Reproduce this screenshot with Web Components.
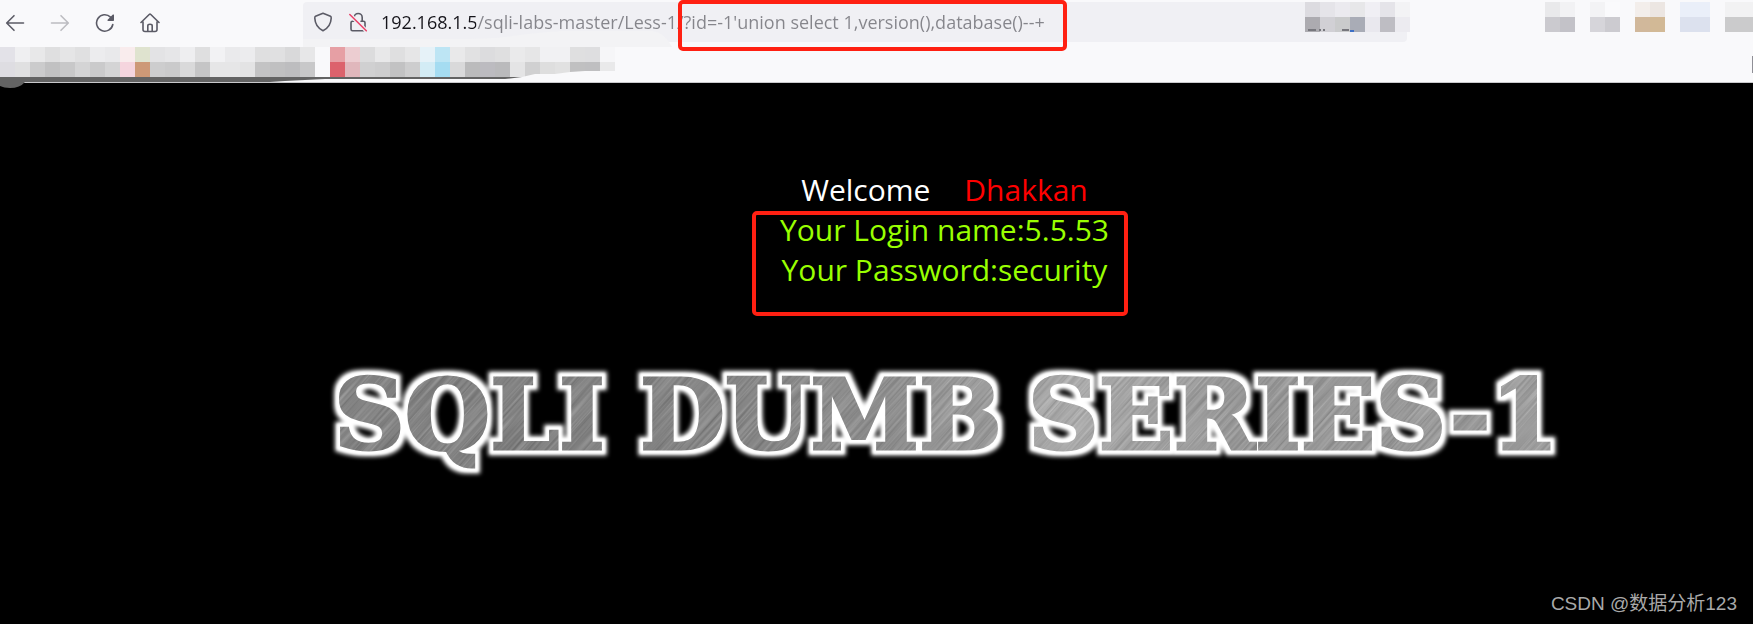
<!DOCTYPE html>
<html lang="en">
<head>
<meta charset="UTF-8">
<title>Less-1 SQL injection</title>
<style>
  body {
    margin: 0;
    min-height: 100vh;
    display: flex;
    flex-direction: column;
    background: #000;
    font-family: "Open Sans", "Noto Sans", "Noto Sans CJK SC", sans-serif;
    overflow-x: hidden;
  }
</style>
</head>
<body>
<browser-chrome>
  <nav-buttons slot="nav"></nav-buttons>
  <address-bar slot="address"></address-bar>
  <extension-tray slot="extensions"></extension-tray>
  <bookmark-strip slot="bookmarks"></bookmark-strip>
</browser-chrome>
<lesson-page>
  <login-result name="5.5.53" password="security"></login-result>
  <title-banner></title-banner>
</lesson-page>
<author-mark>CSDN @数据分析123</author-mark>

<script>
// Attach an open shadow root and fill it
function fill(host, html) {
  host.attachShadow({ mode: 'open' }).innerHTML = html;
}

// Turn rows of hex colours into 15px blocks, "-" leaves a block empty
function mosaic(rows) {
  return rows.map((row, y) => row.trim().split(/\s+/).map((c, x) =>
    c === '-' ? '' : `<rect x="${x * 15}" y="${y * 15}" width="15" height="15" fill="#${c}"/>`
  ).join('')).join('');
}

class BrowserChrome extends HTMLElement {
  constructor() {
    super();
    fill(this, `
      <style>
        :host { display: block; background: #f9f9fb; position: relative; border-bottom: 1px solid #c9c9cc; }
        .bar { display: flex; height: 47px; align-items: flex-start; }
        slot[name="address"]::slotted(*) { flex: 1; margin: 2px 138px 0; }
      </style>
      <div class="bar">
        <slot name="nav"></slot>
        <slot name="address"></slot>
        <slot name="extensions"></slot>
      </div>
      <slot name="bookmarks"></slot>
    `);
  }
}
customElements.define('browser-chrome', BrowserChrome);

class NavButtons extends HTMLElement {
  constructor() {
    super();
    fill(this, `
      <style>
        :host { display: flex; gap: 15px; padding-top: 8px; }
        button { width: 30px; height: 30px; padding: 0; border: 0; background: none; color: #5b5b66; display: grid; place-items: center; }
        button:disabled { color: #bcbcc1; }
        svg { width: 20px; height: 20px; fill: none; stroke: currentColor; stroke-width: 1.6; stroke-linecap: round; stroke-linejoin: round; }
      </style>
      <button aria-label="Back"><svg viewBox="0 0 20 20"><path d="M18.500 10H2M9 2.700L1.700 10L9 17.300"/></svg></button>
      <button aria-label="Forward" disabled><svg viewBox="0 0 20 20"><path d="M1.500 10H18M11 2.700L18.300 10L11 17.300"/></svg></button>
      <button aria-label="Reload"><svg viewBox="0 0 20 20"><path d="M17.800 11.500A8.200 8.200 0 1 1 15.500 4.100"/><path d="M18.200 2.200V7.200H13.200Z" fill="currentColor"/></svg></button>
      <button aria-label="Home"><svg viewBox="0 0 20 20"><path d="M1 9.500L9.200 1.500Q10 .8 10.800 1.500L19 9.500M3 8.500V16.500Q3 18.500 5 18.500H15Q17 18.500 17 16.500V8.500M7.800 18V12.800Q7.800 11.300 10 11.300T12.200 12.800V18"/></svg></button>
    `);
  }
}
customElements.define('nav-buttons', NavButtons);

class AddressBar extends HTMLElement {
  constructor() {
    super();
    fill(this, `
      <style>
        :host { display: flex; height: 40px; align-items: center; background: #f0f0f4; border-radius: 4px; position: relative; min-width: 0; }
        .icons { display: flex; gap: 15px; padding: 0 13px 0 10px; z-index: 1; }
        .icons svg { width: 20px; height: 20px; fill: none; stroke: #5b5b66; stroke-width: 1.6; stroke-linecap: round; stroke-linejoin: round; }
        /* host part of the address is dark, the path is grey */
        input {
          flex: 1; min-width: 0; height: 40px; padding: 0; border: 0; outline: 0; z-index: 1;
          font: 18px "Open Sans", "Noto Sans", sans-serif;
          color: #85858b;
          -webkit-text-fill-color: transparent;
          background: linear-gradient(90deg, #15141a 95px, #85858b 95px);
          -webkit-background-clip: text; background-clip: text;
        }
        .smudge { position: absolute; left: 0; bottom: -5px; width: 372px; height: 16px; }
        .blocks { position: absolute; right: -3px; top: 0; width: 105px; height: 33px; z-index: 1; }
        .mark { position: absolute; left: 375px; top: -2px; width: 381px; height: 43px; border: 4px solid #ff2012; border-radius: 5px; z-index: 2; }
      </style>
      <svg class="smudge" viewBox="0 0 372 16"><path d="M0 8H150Q190 8 210 5T260 0H350Q362 2 369 16H0Z" fill="#f3f3f5"/></svg>
      <div class="icons">
        <svg viewBox="0 0 20 20"><path d="M10 1.200L17.500 4.300Q18.300 4.700 18.200 6.200Q17.800 14.800 10 18.700Q2.200 14.800 1.800 6.200Q1.700 4.700 2.500 4.300Z"/></svg>
        <svg viewBox="0 0 20 20"><path d="M6.200 6V5.500A4 4 0 0 1 14.200 5.500V8.500M9 9.200H4.500Q3 9.200 3 10.700V17Q3 18.700 4.500 18.700H15.500Q17 18.700 17 17V10.700Q17 9.200 15.500 9.200H13"/><path d="M1.800 2.500L18.300 18.800" stroke="#f0f0f4" stroke-width="4"/><path d="M1.800 2.500L18.300 18.800" stroke="#e9456b"/></svg>
      </div>
      <input type="text" aria-label="Address" spellcheck="false" value="192.168.1.5/sqli-labs-master/Less-1/?id=-1'union select 1,version(),database()--+">
      <svg class="blocks" viewBox="0 0 105 33">
        ${mosaic([
          'dcdbe0 e5e4e9 ebeaef e7e7e9 f0eff4 e5e4e9 f3f3f5',
          'acabb0 d1d0d5 cacbcc a9acb6 e9e8ee bebdc3 ecebf0'])}
        <path d="M3 28H11M14 28H16M18 28H20M37 28H44" stroke="#77777d" stroke-width="2"/>
        <path d="M45 29H49" stroke="#3d6fc5" stroke-width="2"/>
      </svg>
      <span class="mark"></span>
    `);
  }
}
customElements.define('address-bar', AddressBar);

class ExtensionTray extends HTMLElement {
  constructor() {
    super();
    fill(this, `
      <style>
        :host { display: block; width: 208px; padding-top: 2px; overflow: hidden; }
        svg { display: block; width: 210px; height: 30px; }
      </style>
      <svg viewBox="0 0 210 30">${mosaic([
        'e9e9eb f2f2f4 - f3f3f5 fafafc - f3eeeb ece6e2 - eaeff9 eaeff9 - f2f2f3 f2f2f3',
        'cbcacf c3c2c8 - d6d5da cccbd0 - d1b89b d2b996 - dce1ee dce1ee - cbcbcc cbcbcc'])}</svg>
    `);
  }
}
customElements.define('extension-tray', ExtensionTray);

class BookmarkStrip extends HTMLElement {
  constructor() {
    super();
    fill(this, `
      <style>
        :host { display: flex; justify-content: space-between; height: 35px; }
        svg { display: block; width: 620px; height: 42px; position: relative; overflow: visible; }
        .edge { width: 1px; height: 17px; margin-top: 9px; background: #8f8f96; }
      </style>
      <svg viewBox="0 0 620 42">
        ${mosaic([
          `e3e2e8 efeff1 e8e8e9 dfdfe0 e5e5e6 e0e0e1 ececee e9e9eb f9eced dfe3cf e3e3e5 e6e6e8 eeeef0 dfdfe0
           f2f2f4 eaeaec ececee dfdfe0 e0e0e1 d9d9da e7e7e8 f9f9fb e69fa4 eccdd1 dcdcdd e8e8e9 dfdfe0 e6e6e7
           e6f2f8 bde5f4 e9e9ea e1e1e2 dcdcde dfdfe0 eaeaeb e6e6e7 f1f1f3 f1f1f3 dfdfe0 dedee0 f6f6f8`,
          `dedde2 e0e0e1 cbcbcc c1c1c2 c8c8c9 d4d4d5 cacacb d4d4d5 f5d5de cd9977 cdcdce cacacb d9d9da c5c5c6
           e6e6e7 e6e6e7 e3e3e4 c3c3c4 c0c0c1 bdbdbf c8c8c9 f9f9fb dc626c e0b7bc d0d0d1 cdcdce c2c2c3 cdcdce
           d3ecf5 a5dcf1 d9d9da bbbbbc bcbbc0 bababc e4e4e5 d0d0d1 dedede e1e1e1 c0c0c1 bfbfc1 e9e9ea`])}
        <path d="M522 30L535 27L555 27L570 25L585 24H616V31H522Z" fill="#f9f9fb"/>
        <path d="M0 30H522L505 32H325L285 34L270 35H25Q20 41 10 41Q4 41 0 39Z" fill="#636363"/>
      </svg>
      <span class="edge"></span>
    `);
  }
}
customElements.define('bookmark-strip', BookmarkStrip);

// The lesson body sits right of the window's centre, behind a left gutter
class LessonPage extends HTMLElement {
  constructor() {
    super();
    fill(this, `
      <style>
        :host { display: flex; flex-direction: column; align-items: center; gap: 52px; padding: 87px 0 0 136px; }
      </style>
      <slot></slot>
    `);
  }
}
customElements.define('lesson-page', LessonPage);

class LoginResult extends HTMLElement {
  constructor() {
    super();
    fill(this, `
      <style>
        :host { display: block; position: relative; text-align: center; font-size: 30px; line-height: 40px; color: #99ff00; }
        p { margin: 0; }
        .hello { display: flex; justify-content: center; gap: 34px; color: #fff; }
        .user { color: #f00; }
        .mark { position: absolute; left: 50%; top: 41px; width: 368px; height: 97px; margin-left: -192px; border: 4px solid #ff2012; border-radius: 5px; }
      </style>
      <p class="hello"><span>Welcome</span><span class="user">Dhakkan</span></p>
      <p>Your Login name:${this.getAttribute('name')}</p>
      <p>Your Password:${this.getAttribute('password')}</p>
      <span class="mark"></span>
    `);
  }
}
customElements.define('login-result', LoginResult);

class TitleBanner extends HTMLElement {
  constructor() {
    super();
    fill(this, `
      <style>
        :host { display: block; width: 100%; max-width: 1250px; }
        svg { display: block; width: 100%; }
        text { font: bold 98px "DejaVu Serif", serif; }
        .metal { fill: url(#brushed); stroke: url(#brushed); stroke-width: 3; filter: url(#glow); }
      </style>
      <svg viewBox="0 0 1250 150" role="img" aria-label="SQLI DUMB SERIES-1">
        <defs>
          <!-- white rim with a soft outer edge, the metal on top -->
          <filter id="glow" filterUnits="userSpaceOnUse" x="0" y="0" width="1250" height="150" color-interpolation-filters="sRGB">
            <feFlood flood-color="#fff" result="white"/>
            <feMorphology in="SourceAlpha" operator="dilate" radius="3"/>
            <feGaussianBlur stdDeviation="1"/>
            <feComposite in="white" operator="in" in2="" result="rim"/>
            <feMorphology in="SourceAlpha" operator="dilate" radius="5" result="wide"/>
            <feGaussianBlur in="wide" stdDeviation="2" result="haze"/>
            <feComposite in="white" in2="haze" operator="in" result="outer"/>
            <feMorphology in="SourceAlpha" operator="dilate" radius="3" result="near"/>
            <feGaussianBlur in="near" stdDeviation="1" result="edge"/>
            <feComposite in="white" in2="edge" operator="in" result="inner"/>
            <feMerge>
              <feMergeNode in="outer"/><feMergeNode in="inner"/><feMergeNode in="SourceGraphic"/>
            </feMerge>
          </filter>
          <filter id="grain" x="0" y="0" width="100%" height="100%" color-interpolation-filters="sRGB">
            <feTurbulence type="fractalNoise" baseFrequency=".012 .45" numOctaves="2" seed="4"/>
            <feColorMatrix values="1 0 0 0 0  1 0 0 0 0  1 0 0 0 0  0 0 0 0 .25"/>
          </filter>
          <linearGradient id="sheen" x1="0" x2="1">
            <stop offset="0" stop-color="#868686"/><stop offset=".25" stop-color="#828282"/>
            <stop offset=".45" stop-color="#929292"/><stop offset=".6" stop-color="#b8b8b8"/>
            <stop offset=".75" stop-color="#9c9c9c"/><stop offset="1" stop-color="#a8a8a8"/>
          </linearGradient>
          <pattern id="brushed" width="1250" height="150" patternUnits="userSpaceOnUse">
            <rect width="1250" height="150" fill="url(#sheen)"/>
            <g transform="rotate(-48 625 62)"><rect x="0" y="-500" width="1250" height="1125" filter="url(#grain)"/></g>
          </pattern>
        </defs>
        <g class="metal">
          <text x="14" y="107">SQLI</text>
          <text x="320" y="107">DUMB</text>
          <text x="708" y="107">SERIES-1</text>
        </g>
      </svg>
    `);
  }
}
customElements.define('title-banner', TitleBanner);

class AuthorMark extends HTMLElement {
  constructor() {
    super();
    fill(this, `
      <style>
        :host { display: block; margin-top: auto; padding: 0 16px 5px; text-align: right; font: 19px/30px "Liberation Sans", "Noto Sans CJK SC", sans-serif; color: #a9a9a9; }
      </style>
      <slot></slot>
    `);
  }
}
customElements.define('author-mark', AuthorMark);
</script>
</body>
</html>
